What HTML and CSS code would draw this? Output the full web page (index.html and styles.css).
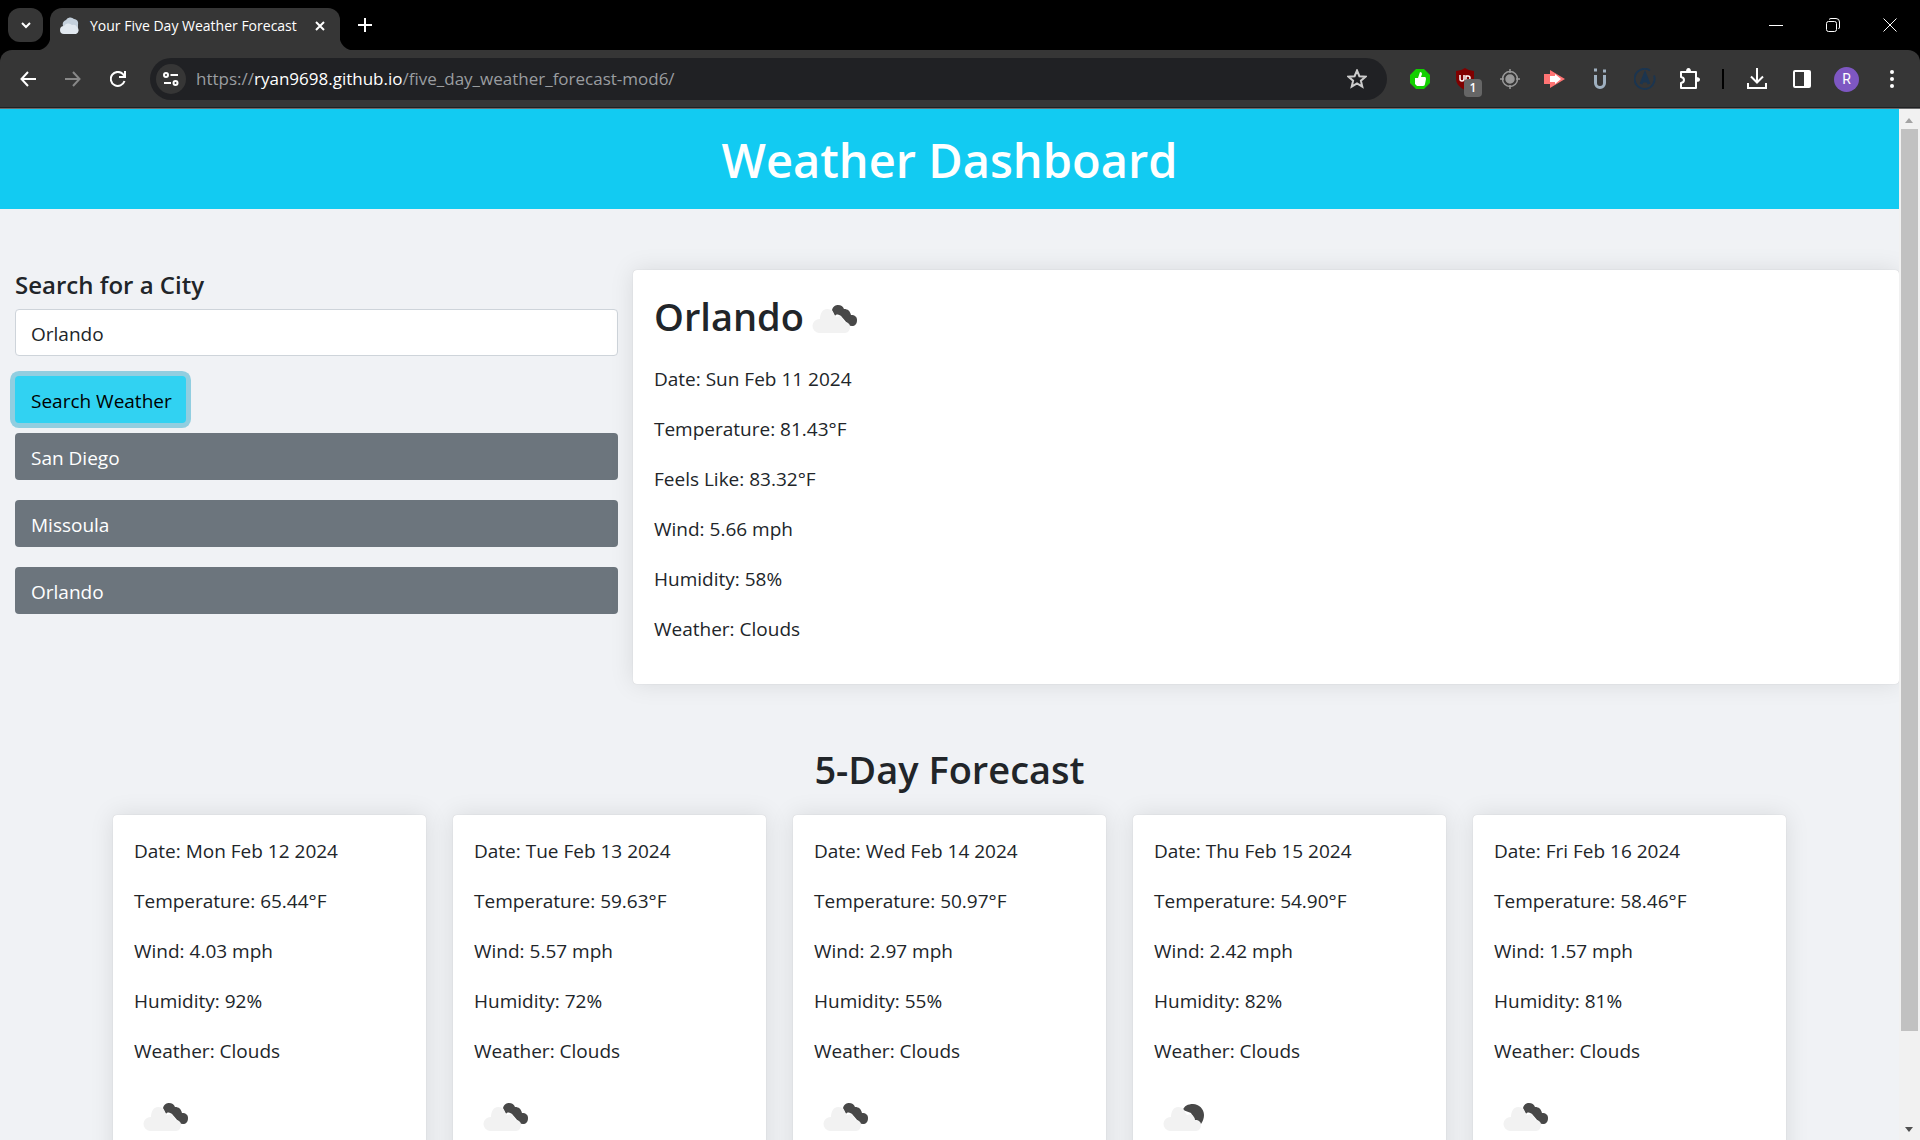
FILE: index.html
```html
<!DOCTYPE html>
<html lang="en">
<head>
<meta charset="utf-8">
<title>Your Five Day Weather Forecast</title>
<link rel="stylesheet" href="styles.css">
</head>
<body>
<svg class="defs" aria-hidden="true">
  <symbol id="cloud" viewBox="0 0 46 30">
    <path fill="#484848" d="M20 6C21 2 24 1 26 1c3 0 5 1.500 6 4 4 0 6 2 7 6 4 0 6 2 6 5 0 4-2 6-5 6-3 0-4-1-5-3l-6-7c-3-2-5-2-6 0z"/>
    <path fill="#f2f2f2" d="M7 29a7 7 0 0 1 1-14C8 9 11 5 15 5c3 0 5 1 6 3 1 2 2 4 3 5l4-1c2 1 4 4 4 6 4 0 6 2 6 5s-2 6-5 6z"/>
  </symbol>
  <symbol id="cloud-moon" viewBox="0 0 46 30">
    <path fill="#484848" d="M20 8c1-4 5-6 10-6 6 0 11 5 11 11 0 3-1 6-3 9l-6-3-4-8z"/>
    <path fill="#f2f2f2" d="M7 29a7 7 0 0 1 1-14C8 9 11 5 15 5c3 0 5 1 6 3 1 2 2 4 3 5l4-1c2 1 4 4 4 6 4 0 6 2 6 5s-2 6-5 6z"/>
  </symbol>
</svg>
<div class="browser">
  <div class="tabs">
    <button class="tab-search" aria-label="Search tabs"><svg viewBox="0 0 12 12" width="12" height="12"><path d="M2 4l4 4 4-4" fill="none" stroke="#fff" stroke-width="2"/></svg></button>
    <div class="tab">
      <svg width="20" height="18" viewBox="0 0 20 18"><path fill="#c4d0dc" d="M3 9a5 5 0 0 1 3-6 5 5 0 0 1 8-1 4 4 0 0 1 4 5v6H5z"/><path fill="#e1e8ef" d="M4 17a4 4 0 0 1 0-8 5 5 0 0 1 8-1 4 4 0 0 1 5 2 4 4 0 0 1-1 7z"/></svg>
      <span class="tab-title">Your Five Day Weather Forecast</span>
      <button class="icon-button" aria-label="Close tab"><svg width="10" height="10" viewBox="0 0 10 10"><path d="M1 1l8 8M9 1L1 9" stroke="#fff" stroke-width="2"/></svg></button>
    </div>
    <button class="icon-button new-tab" aria-label="New tab"><svg width="14" height="14" viewBox="0 0 14 14"><path d="M7 0v14M0 7h14" stroke="#fff" stroke-width="2"/></svg></button>
    <div class="window-controls">
      <button class="icon-button" aria-label="Minimize"><svg width="14" height="14" viewBox="0 0 14 14"><path d="M0 7.500h14" stroke="#fff"/></svg></button>
      <button class="icon-button" aria-label="Restore"><svg width="14" height="14" viewBox="0 0 14 14" fill="none" stroke="#fff"><rect x=".5" y="3.500" width="10" height="10" rx="2"/><path d="M3 1.500q1-1 2-1h5q3.500 0 3.500 3.500v5q0 1-1 2"/></svg></button>
      <button class="icon-button" aria-label="Close"><svg width="14" height="14" viewBox="0 0 14 14"><path d="M.5.5l13 13M13.500.5l-13 13" stroke="#fff"/></svg></button>
    </div>
  </div>
  <div class="toolbar">
    <div class="nav">
      <button class="icon-button" aria-label="Back"><svg width="16" height="16" viewBox="0 0 16 16" fill="none" stroke="#fff" stroke-width="2"><path d="M16 8H2M8 1L1.500 8 8 15"/></svg></button>
      <button class="icon-button" aria-label="Forward"><svg width="16" height="16" viewBox="0 0 16 16" fill="none" stroke="#888" stroke-width="2"><path d="M0 8h14M8 1l6.500 7L8 15"/></svg></button>
      <button class="icon-button" aria-label="Reload"><svg width="16" height="16" viewBox="0 0 16 16" fill="none" stroke="#fff" stroke-width="2"><path d="M14.500 10A7 7 0 1 1 13 3.200l2 2M15 0v6H9"/></svg></button>
    </div>
    <div class="omnibox">
      <button class="site-info" aria-label="Site information"><svg width="16" height="14" viewBox="0 0 16 14" fill="none" stroke="#fff" stroke-width="2"><circle cx="3" cy="3" r="2"/><path d="M7.500 3H15M1 11h7"/><circle cx="12.500" cy="11" r="2"/></svg></button>
      <span class="url">https://<b>ryan9698.github.io</b>/five_day_weather_forecast-mod6/</span>
      <button class="icon-button" aria-label="Bookmark"><svg width="20" height="20" viewBox="0 0 20 20"><path d="M10 1.500l2.400 5.700 6.100.5-4.600 4 1.400 6-5.300-3.200-5.300 3.200 1.400-6-4.600-4 6.100-.5z" fill="none" stroke="#ccc" stroke-width="2"/></svg></button>
    </div>
    <div class="extensions">
      <button class="icon-button" aria-label="Approve"><svg width="22" height="22" viewBox="0 0 22 22"><path fill="#12cf00" d="M7 1h8l6 6v8l-6 6H7l-6-6V7z"/><path fill="#fff" d="M6 10h3l2-6q2 0 2 2l-1 3h4q1 0 1 2l-1 5q0 2-2 2H8l-2-2z"/></svg></button>
      <button class="icon-button ublock" aria-label="Content blocker"><svg width="20" height="22" viewBox="0 0 20 22"><path fill="#800000" d="M10 0q4 3 9 3v8q0 7-9 11Q1 18 1 11V3q5 0 9-3z"/><path d="M5 7v4q0 2 2 2t2-2V7m2 7V8h2q2 0 2 2t-2 2h-2" fill="none" stroke="#fff" stroke-width="1.500"/></svg><span class="badge">1</span></button>
      <button class="icon-button" aria-label="Locator"><svg width="20" height="20" viewBox="0 0 20 20" fill="none" stroke="#999" stroke-width="1.500"><circle cx="10" cy="10" r="7.500"/><circle cx="10" cy="10" r="4" fill="#999"/><path d="M10 0v4M10 16v4M0 10h4M16 10h4"/></svg></button>
      <button class="icon-button" aria-label="Redirect"><svg width="21" height="18" viewBox="0 0 21 18"><path fill="#ff7474" d="M0 4h6V0l15 9L6 18v-4H0z"/><path fill="#fff" d="M6 6h5V4l6 5-6 5v-2H6z"/></svg></button>
      <button class="icon-button" aria-label="Underline"><svg width="16" height="22" viewBox="0 0 16 22" fill="none" stroke="#9fb0c0" stroke-width="3"><path d="M3.500 7v8a4.500 4.500 0 0 0 9 0V7"/><path d="M2 2h3M11 3h3"/></svg></button>
      <button class="icon-button" aria-label="Apollo"><svg width="22" height="22" viewBox="0 0 22 22" fill="none" stroke="#1b3550" stroke-width="2"><path d="M16 2.500a10 10 0 1 0 4 5"/><path d="M7 16l4-10 4 10M9 13h5" stroke-width="3"/></svg></button>
      <button class="icon-button" aria-label="Extensions"><svg width="22" height="22" viewBox="0 0 22 22"><path fill="none" stroke="#fff" stroke-width="2" stroke-linejoin="round" d="M2 4h15v16H2v-5q3-.5 3-3T2 9z"/><path fill="#fff" d="M7 4q0-4 2.500-4T12 4zM17 9q4 0 4 2.500T17 14z"/></svg></button>
      <span class="divider"></span>
      <button class="icon-button" aria-label="Downloads"><svg width="20" height="22" viewBox="0 0 20 22" fill="none" stroke="#fff" stroke-width="2"><path d="M10 0v14M4 8.500l6 6 6-6M1 15v5h18v-5"/></svg></button>
      <button class="icon-button" aria-label="Side panel"><svg width="18" height="18" viewBox="0 0 18 18"><rect x="1" y="1" width="16" height="16" rx="1" fill="none" stroke="#fff" stroke-width="2"/><path fill="#fff" d="M11 1h6v16h-6z"/></svg></button>
      <button class="avatar" aria-label="Profile">R</button>
      <button class="icon-button" aria-label="Menu"><svg width="4" height="20" viewBox="0 0 4 20" fill="#fff"><circle cx="2" cy="3" r="2"/><circle cx="2" cy="10" r="2"/><circle cx="2" cy="17" r="2"/></svg></button>
    </div>
  </div>
</div>
<div class="viewport">
  <div class="page">
    <header class="hero"><h1>Weather Dashboard</h1></header>
    <main>
      <div class="overview">
        <section class="search">
          <label for="city">Search for a City</label>
          <input id="city" type="text" value="Orlando">
          <button class="submit">Search Weather</button>
          <div class="history">
            <button>San Diego</button>
            <button>Missoula</button>
            <button>Orlando</button>
          </div>
        </section>
        <section class="card current">
          <h2>Orlando <svg class="weather" width="46" height="30"><use href="#cloud"/></svg></h2>
          <p>Date: Sun Feb 11 2024</p>
          <p>Temperature: 81.43°F</p>
          <p>Feels Like: 83.32°F</p>
          <p>Wind: 5.66 mph</p>
          <p>Humidity: 58%</p>
          <p>Weather: Clouds</p>
        </section>
      </div>
      <h2 class="forecast-title">5-Day Forecast</h2>
      <div class="forecast">
        <article class="card"><p>Date: Mon Feb 12 2024</p><p>Temperature: 65.44°F</p><p>Wind: 4.03 mph</p><p>Humidity: 92%</p><p>Weather: Clouds</p><svg class="weather" width="46" height="30"><use href="#cloud"/></svg></article>
        <article class="card"><p>Date: Tue Feb 13 2024</p><p>Temperature: 59.63°F</p><p>Wind: 5.57 mph</p><p>Humidity: 72%</p><p>Weather: Clouds</p><svg class="weather" width="46" height="30"><use href="#cloud"/></svg></article>
        <article class="card"><p>Date: Wed Feb 14 2024</p><p>Temperature: 50.97°F</p><p>Wind: 2.97 mph</p><p>Humidity: 55%</p><p>Weather: Clouds</p><svg class="weather" width="46" height="30"><use href="#cloud"/></svg></article>
        <article class="card"><p>Date: Thu Feb 15 2024</p><p>Temperature: 54.90°F</p><p>Wind: 2.42 mph</p><p>Humidity: 82%</p><p>Weather: Clouds</p><svg class="weather" width="46" height="30"><use href="#cloud-moon"/></svg></article>
        <article class="card"><p>Date: Fri Feb 16 2024</p><p>Temperature: 58.46°F</p><p>Wind: 1.57 mph</p><p>Humidity: 81%</p><p>Weather: Clouds</p><svg class="weather" width="46" height="30"><use href="#cloud"/></svg></article>
      </div>
    </main>
  </div>
  <div class="scrollbar" aria-hidden="true">
    <svg width="20" height="20" viewBox="0 0 20 20"><path d="M6 14l4-5 4 5z" fill="#a3a3a3"/></svg>
    <div class="track"><div class="thumb"></div></div>
    <svg width="20" height="20" viewBox="0 0 20 20"><path d="M6 7l4 5 4-5z" fill="#505050"/></svg>
  </div>
</div>
</body>
</html>
```
FILE: styles.css
```css
* { box-sizing: border-box; }
body {
  margin: 0;
  height: 100vh;
  display: flex;
  flex-direction: column;
  overflow: hidden;
  font-family: "Open Sans", sans-serif;
  font-size: 19px;
  line-height: 30px;
  color: #212529;
}
button, input { font: inherit; color: inherit; border: 0; margin: 0; padding: 0; }
svg { display: block; flex: none; }
h1, h2, p { margin: 0; }
.defs { position: absolute; width: 0; height: 0; }

.browser { flex: none; background: #000; }
.icon-button { display: grid; place-items: center; background: none; }
.tabs { display: flex; height: 50px; padding: 0 2px 0 8px; }
.tab-search {
  display: grid;
  place-items: center;
  width: 35px;
  height: 34px;
  margin: 8px 7px 0 0;
  border-radius: 12px;
  background: #363636;
}
.tab {
  position: relative;
  display: flex;
  align-items: center;
  width: 290px;
  height: 42px;
  margin-top: 8px;
  padding: 0 15px 7px 10px;
  border-radius: 12px 12px 0 0;
  background: #363636;
  color: #fff;
  font-size: 14px;
}
.tab::before, .tab::after {
  content: "";
  position: absolute;
  bottom: 0;
  width: 14px;
  height: 14px;
}
.tab::before { left: -14px; background: radial-gradient(circle at 0 0, transparent 14px, #363636 15px); }
.tab::after { right: -14px; background: radial-gradient(circle at 100% 0, transparent 14px, #363636 15px); }
.tab-title { flex: 1; padding-left: 10px; white-space: nowrap; }
.new-tab { width: 50px; }
.window-controls { display: flex; margin-left: auto; }
.window-controls .icon-button { width: 57px; }

.toolbar {
  display: flex;
  align-items: center;
  height: 59px;
  border-bottom: 1px solid #6b6b6b;
  border-radius: 12px 12px 0 0;
  background: #363636;
  box-shadow: inset 0 -1px #202124;
}
.nav { display: flex; padding-left: 5px; }
.nav .icon-button { width: 45px; height: 40px; }
.omnibox {
  flex: 1;
  display: flex;
  align-items: center;
  height: 42px;
  margin: 0 10px;
  padding: 0 20px 0 6px;
  border-radius: 21px;
  background: #202124;
}
.site-info {
  display: grid;
  place-items: center;
  width: 30px;
  height: 30px;
  border-radius: 50%;
  background: #363636;
}
.url { flex: 1; padding-left: 10px; font-size: 17px; color: #9a9da0; }
.url b { font-weight: 400; color: #fff; }
.extensions { display: flex; align-items: center; padding-right: 6px; }
.extensions .icon-button { width: 45px; height: 40px; }
.ublock { position: relative; }
.badge {
  position: absolute;
  right: 5px;
  bottom: 2px;
  width: 18px;
  height: 18px;
  border-radius: 4px;
  background: #666;
  color: #fff;
  font: 600 12px/18px "Open Sans", sans-serif;
}
.divider { width: 2px; height: 20px; margin: 0 10px; background: #000; }
.avatar {
  width: 25px;
  height: 25px;
  margin: 0 10px;
  border-radius: 50%;
  background: #7e57c2;
  color: #fff;
  font: 14px/25px Roboto, sans-serif;
}

.viewport { flex: 1; display: flex; min-height: 0; }
.page { flex: 1; overflow: hidden; background: #f0f2f5; }
.hero { padding: 21px 20px 19px; background: #12cbf2; color: #fff; text-align: center; }
.hero h1 { font-size: 47px; line-height: 60px; font-weight: 600; }
.overview { display: flex; align-items: flex-start; padding-top: 61px; }
.search { display: flex; flex-direction: column; align-items: flex-start; width: 33.333%; padding: 0 15px; }
.search label { font-size: 24px; font-weight: 600; margin-bottom: 9px; }
.search input {
  width: 100%;
  height: 47px;
  padding: 2px 15px 0;
  border: 1px solid #ced4da;
  border-radius: 4px;
  background: #fff;
}
.submit {
  height: 47px;
  margin: 20px 0 10px;
  padding: 2px 14px 0 16px;
  border-radius: 4px;
  background: #31d2f2;
  box-shadow: 0 0 0 5px #91cee0;
  color: #000;
}
.history { display: flex; flex-direction: column; gap: 20px; width: 100%; }
.history button {
  height: 47px;
  padding: 2px 16px 0;
  border-radius: 4px;
  background: #6c757d;
  color: #fff;
  text-align: left;
}
.card {
  padding: 21px;
  border-radius: 4px;
  background: #fff;
  box-shadow: 0 0 25px rgba(0, 0, 0, .1), 0 0 1px rgba(0, 0, 0, .2);
}
.card p { margin-bottom: 20px; }
.current { flex: 1; padding-bottom: 20px; }
.current h2 { display: flex; align-items: center; gap: 8px; margin-bottom: 23px; }
.current .weather { margin-top: 6px; }
h2 { font-size: 38px; line-height: 50px; font-weight: 600; }
.forecast-title { margin-top: 60px; text-align: center; }
.forecast {
  display: grid;
  grid-template-columns: repeat(5, 1fr);
  gap: 27px;
  padding: 21px 113px 0;
}
.forecast .weather { margin: 36px 9px 60px; }
.forecast .card { white-space: nowrap; }

.scrollbar { display: flex; flex-direction: column; width: 21px; background: #f1f1f1; }
.track { flex: 1; padding: 0 2px; }
.thumb { height: 91%; background: #c1c1c1; }
```
